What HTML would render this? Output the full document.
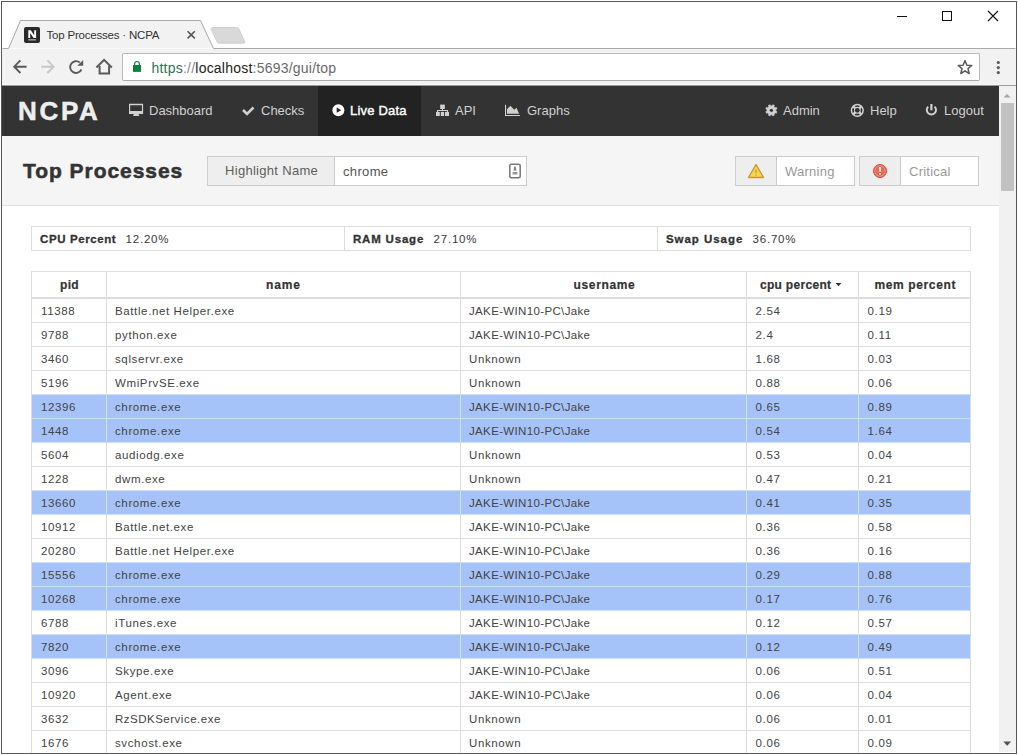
<!DOCTYPE html>
<html><head><meta charset="utf-8">
<style>
*{box-sizing:border-box;margin:0;padding:0}
html,body{width:1018px;height:755px;overflow:hidden;background:#fff;font-family:"Liberation Sans",sans-serif}
.abs{position:absolute}
#win{position:absolute;left:1px;top:1px;width:1016px;height:753px;border:1px solid #585858;background:transparent}
/* everything positioned in page coords relative to body, so use fixed containers */
.t{position:absolute;white-space:pre;line-height:1}
#tabtitle{left:46.5px;top:29.8px;font-size:11.5px;letter-spacing:-0.2px;color:#333}
#toolbar{left:2px;top:49px;width:1014px;height:36px;background:#f2f2f2}
#omni{left:122px;top:53px;width:858px;height:28px;background:#fff;border:1px solid #b9b9b9;border-bottom-color:#a9a9a9;border-radius:2px}
#nav{left:2px;top:86px;width:997px;height:50px;background:#333}
#live{left:318px;top:86px;width:103px;height:50px;background:#222}
.nt{color:#d0d0d0;font-size:13px;top:104px}
#hdr{left:2px;top:136px;width:997px;height:70px;background:#f5f5f5;border-bottom:1px solid #e0e0e0}
#sb{left:999px;top:86px;width:17px;height:666px;background:#f1f1f1}
#thumb{left:1001px;top:103px;width:13px;height:88px;background:#c1c1c1}

.grp{position:absolute;top:156px;height:30px;border:1px solid #ccc;background:#fff}
.addon{position:absolute;top:156px;height:30px;border:1px solid #ccc;background:#eee}
.ph{color:#999;font-size:13px;top:164.5px;letter-spacing:0.25px}
#sum{left:31px;top:226px;width:940px;height:25px;border:1px solid #ddd}
.sl{font-size:11.5px;font-weight:bold;color:#333;top:234px;-webkit-text-stroke:0.3px #333}
.sv{font-size:11.5px;color:#3a3a3a;top:234px}
#tbl{left:31px;top:271px;width:940px;height:500px;border:1px solid #ddd;border-bottom:none}
.vl{position:absolute;top:271px;width:1px;height:500px;background:#ddd}
.hl{position:absolute;left:32px;width:938px;height:23px;background:#a5c3f8}
.hb{position:absolute;left:32px;width:938px;height:1px;background:#ddd}
.th{font-size:12px;font-weight:bold;color:#333;top:279px;letter-spacing:0.3px;-webkit-text-stroke:0.2px #333}
.c{position:absolute;white-space:pre;font-size:11.5px;line-height:23px;color:#444;padding-top:1px}
.d{letter-spacing:0.7px}
.n{letter-spacing:0.62px}
.u{letter-spacing:0.35px}
</style></head>
<body>

<!-- tab strip -->
<svg class="abs" style="left:0;top:0" width="1018" height="90">
  <path d="M2.5 48.5 H8.5 L20.5 20.5 H200.5 L213.5 48.5 H1015.5" fill="#f2f2f2" stroke="#a9a9a9" stroke-width="1"/>
  <path d="M213 27.5 H236.8 Q238.2 27.5 238.8 28.8 L244.6 41.3 Q245.2 43.2 243.4 43.2 H219 Q217.8 43.2 217.2 42 L211.2 29.3 Q210.8 27.5 213 27.5Z" fill="#d9d9d9" stroke="#c6c6c6" stroke-width="0.8"/>
  <!-- favicon -->
  <rect x="24" y="27" width="16" height="16" rx="2" fill="#2a2a2a"/>
  <path d="M28.3 30.2h2.5l3.4 5.1v-5.1h1.9v7.9h-2.5l-3.4-5.1v5.1h-1.9z" fill="#fff"/>
  <rect x="28.3" y="39.3" width="7.8" height="1.1" fill="#c8c8c8"/>
  <!-- close x -->
  <path d="M187.6 31.2 L194.8 38.4 M194.8 31.2 L187.6 38.4" stroke="#555" stroke-width="1.6"/>
  <!-- window controls -->
  <rect x="897" y="16" width="10" height="1" fill="#111"/>
  <rect x="942.5" y="11.5" width="9" height="9" fill="none" stroke="#111" stroke-width="1"/>
  <path d="M988 11 L998 21 M998 11 L988 21" stroke="#111" stroke-width="1.1"/>
</svg>
<div id="tabtitle" class="t">Top Processes · NCPA</div>

<div id="toolbar" class="abs"></div>
<div class="abs" style="left:2px;top:84px;width:1014px;height:1px;background:#f7f7f7"></div>
<div class="abs" style="left:2px;top:85px;width:1014px;height:1px;background:#9a9a9a"></div>
<div id="omni" class="abs"></div>
<svg class="abs" style="left:0;top:0" width="1018" height="90">
  <path d="M26.6 66.7 H14.2 M20.4 60.4 L14.2 66.7 L20.4 73" fill="none" stroke="#5a5a5a" stroke-width="1.9"/>
  <path d="M41.2 66.7 H53.6 M47.4 60.4 L53.6 66.7 L47.4 73" fill="none" stroke="#c8c8c8" stroke-width="1.9"/>
  <path d="M79.8 62.5 A5.9 5.9 0 1 0 81.4 69.5" fill="none" stroke="#5a5a5a" stroke-width="1.9"/>
  <path d="M77.3 65.7 L83.2 59.9 V65.8 Z" fill="#5a5a5a"/>
  <path d="M96.4 67.5 L104.1 59.8 L111.8 67.5" fill="none" stroke="#5a5a5a" stroke-width="2"/>
  <path d="M99.6 66 V73.6 H109.1 V66" fill="none" stroke="#5a5a5a" stroke-width="2"/>
  <rect x="133" y="65" width="8" height="6.9" fill="#0b8043"/>
  <path d="M134.6 65.2 V63.9 A2.4 2.4 0 0 1 139.4 63.9 V65.2" fill="none" stroke="#0b8043" stroke-width="1.2"/>
  <path d="M965 60.5 L966.9 65.2 L971.8 65.5 L968 68.6 L969.2 73.5 L965 70.8 L960.8 73.5 L962 68.6 L958.2 65.5 L963.1 65.2 Z" fill="none" stroke="#5a5a5a" stroke-width="1.5" stroke-linejoin="round"/>
  <circle cx="998.3" cy="62.5" r="1.6" fill="#5a5a5a"/>
  <circle cx="998.3" cy="67.6" r="1.6" fill="#5a5a5a"/>
  <circle cx="998.3" cy="72.6" r="1.6" fill="#5a5a5a"/>
</svg>
<div class="t" style="left:151.5px;top:61px;font-size:14px;letter-spacing:0.22px;color:#6a6a6a"><span style="color:#2f7650">https</span><span style="color:#888">://</span><span style="color:#222">localhost</span>:5693/gui/top</div>

<!-- navbar -->
<div id="nav" class="abs"></div>
<div id="live" class="abs"></div>
<div class="t" style="left:18px;top:98px;font-size:26px;font-weight:bold;color:#eee;letter-spacing:2.7px;-webkit-text-stroke:0.5px #eee">NCPA</div>
<div class="t nt" style="left:149px">Dashboard</div>
<div class="t nt" style="left:261px">Checks</div>
<div class="t nt" style="left:350px;color:#fff;letter-spacing:0.2px;-webkit-text-stroke:0.4px #fff">Live Data</div>
<div class="t nt" style="left:455px">API</div>
<div class="t nt" style="left:527px">Graphs</div>
<div class="t nt" style="left:783px">Admin</div>
<div class="t nt" style="left:870px">Help</div>
<div class="t nt" style="left:944px">Logout</div>


<svg class="abs" style="left:0;top:0" width="1018" height="140">
 <g fill="#d0d0d0">
  <path fill-rule="evenodd" d="M129 103.8 H143.1 V113.9 H129 Z M130.2 105.2 V110.9 H141.9 V105.2 Z"/>
  <path d="M133.7 113.9 H138.7 V115 H139.2 V116 H133.2 V115 H133.7 Z"/>
 </g>
 <path d="M243 110 L247 114 L253.5 107.5" fill="none" stroke="#d0d0d0" stroke-width="2.6"/>
 <circle cx="338.35" cy="110.2" r="6" fill="#fff"/>
 <path d="M336.7 107.6 L341.2 110.2 L336.7 112.8Z" fill="#222"/>
 <g fill="#d0d0d0">
  <rect x="440.2" y="104.6" width="4.6" height="4.4"/>
  <rect x="442" y="108.5" width="1" height="2.5"/>
  <rect x="437" y="110" width="11" height="1"/>
  <rect x="437" y="110" width="1" height="2"/>
  <rect x="447" y="110" width="1" height="2"/>
  <rect x="436" y="111.9" width="3.8" height="4.1"/>
  <rect x="440.8" y="111.9" width="3.3" height="4.1"/>
  <rect x="445" y="111.9" width="4" height="4.1"/>
 </g>
 <g fill="#d0d0d0">
  <path d="M505 104.8 H506.1 V115 H520 V116 H505 Z"/>
  <path d="M507 113.8 V109.2 L510.3 105.8 L514.3 109.8 L516.5 107.8 L519 113.5 V113.8 Z"/>
 </g>
 <path fill="#d0d0d0" stroke="#d0d0d0" stroke-width="0.5" stroke-linejoin="round" d="M775.84 111.00 L777.04 111.65 L776.35 113.33 L775.04 112.95 L774.05 113.94 L774.43 115.25 L772.75 115.94 L772.10 114.74 L770.70 114.74 L770.05 115.94 L768.37 115.25 L768.75 113.94 L767.76 112.95 L766.45 113.33 L765.76 111.65 L766.96 111.00 L766.96 109.60 L765.76 108.95 L766.45 107.27 L767.76 107.65 L768.75 106.66 L768.37 105.35 L770.05 104.66 L770.70 105.86 L772.10 105.86 L772.75 104.66 L774.43 105.35 L774.05 106.66 L775.04 107.65 L776.35 107.27 L777.04 108.95 L775.84 109.60Z"/>
 <circle cx="771.4" cy="110.3" r="1.6" fill="#333"/>
 <circle cx="857.3" cy="110.3" r="6.6" fill="#d0d0d0"/>
 <circle cx="857.3" cy="110.3" r="4.3" fill="none" stroke="#333" stroke-width="1.7"/>
 <g transform="rotate(45 857.3 110.3)" fill="#d0d0d0"><rect x="856.0999999999999" y="104.3" width="2.4" height="12"/><rect x="851.3" y="109.1" width="12" height="2.4"/></g>
 <circle cx="857.3" cy="110.3" r="2.4" fill="#333"/>
 <path d="M928.2 106.6 A4.6 4.6 0 1 0 934.6 106.6" fill="none" stroke="#d0d0d0" stroke-width="2"/>
 <rect x="930.3" y="104" width="2.2" height="6.3" fill="#d0d0d0"/>
</svg>

<!-- page header -->
<div id="hdr" class="abs"></div>
<div class="t" style="left:23px;top:160px;font-size:21px;font-weight:bold;color:#333;letter-spacing:0.95px;-webkit-text-stroke:0.55px #333">Top Processes</div>


<!-- highlight group -->
<div class="addon" style="left:207px;width:128px"></div>
<div class="grp" style="left:334px;width:193px"></div>
<div class="t" style="left:225px;top:164px;font-size:13px;color:#5e5e5e;letter-spacing:0.3px">Highlight Name</div>
<div class="t" style="left:343px;top:164.5px;font-size:13px;color:#555;letter-spacing:0.35px">chrome</div>
<svg class="abs" style="left:508px;top:163px" width="14" height="16">
 <rect x="1.8" y="1.2" width="10.4" height="13.6" rx="1.5" fill="none" stroke="#777" stroke-width="1.5"/>
 <path d="M6.3 3.6 H7.7 L8.6 7.6 H5.4 Z" fill="#888"/>
 <rect x="4.5" y="9" width="5" height="2.5" fill="#999"/>
</svg>
<!-- warning / critical -->
<div class="addon" style="left:735px;width:42px"></div>
<div class="grp" style="left:776px;width:79px"></div>
<div class="addon" style="left:859px;width:42px"></div>
<div class="grp" style="left:900px;width:79px"></div>
<div class="t ph" style="left:785px">Warning</div>
<div class="t ph" style="left:909px">Critical</div>
<svg class="abs" style="left:746px;top:162px" width="20" height="18">
 <path d="M10 2.5 L17.5 15.5 H2.5 Z" fill="#f5d454" stroke="#cf9532" stroke-width="1.4" stroke-linejoin="round"/>
 <path d="M10 7.5 V11" stroke="#c9a02a" stroke-width="1.4"/>
 <rect x="9.3" y="12.2" width="1.4" height="1.4" fill="#c9a02a"/>
</svg>
<svg class="abs" style="left:872px;top:163px" width="16" height="16">
 <circle cx="8" cy="8" r="6.5" fill="#e96a55" stroke="#c9503e" stroke-width="1"/><circle cx="8" cy="8" r="5.2" fill="none" stroke="#f29a88" stroke-width="0.8"/>
 <path d="M8 4 V8.8" stroke="#fff" stroke-width="1.6"/>
 <rect x="7.2" y="10" width="1.6" height="1.6" fill="#fff"/>
</svg>

<!-- summary -->
<div id="sum" class="abs"></div>
<div class="abs" style="left:344px;top:226px;width:1px;height:25px;background:#ddd"></div>
<div class="abs" style="left:657px;top:226px;width:1px;height:25px;background:#ddd"></div>
<div class="t sl" style="left:40px;letter-spacing:0.6px">CPU Percent</div>
<div class="t sv" style="left:125.5px;letter-spacing:0.8px">12.20%</div>
<div class="t sl" style="left:353px;letter-spacing:0.8px">RAM Usage</div>
<div class="t sv" style="left:433.5px;letter-spacing:0.8px">27.10%</div>
<div class="t sl" style="left:666px;letter-spacing:0.95px">Swap Usage</div>
<div class="t sv" style="left:752.5px;letter-spacing:0.8px">36.70%</div>

<!-- table -->
<div id="tbl" class="abs"></div>
<div class="abs" style="left:32px;top:297px;width:938px;height:2px;background:#ddd"></div>
<div class="t th" style="left:60px">pid</div>
<div class="t th" style="left:266px;letter-spacing:0.9px">name</div>
<div class="t th" style="left:573.5px;letter-spacing:0.65px">username</div>
<div class="t th" style="left:760px">cpu percent</div>
<svg class="abs" style="left:835px;top:282px" width="8" height="6"><path d="M0.5 1 H6.5 L3.5 4.2Z" fill="#333"/></svg>
<div class="t th" style="left:874.5px;letter-spacing:0.62px">mem percent</div>
<div class="hb" style="top:322px"></div>
<div class="c d" style="top:299px;left:41px;letter-spacing:0.6px">11388</div><div class="c n" style="top:299px;left:115px">Battle.net Helper.exe</div><div class="c u" style="top:299px;left:469px">JAKE-WIN10-PC\Jake</div><div class="c d" style="top:299px;left:755.5px">2.54</div><div class="c d" style="top:299px;left:867.5px">0.19</div>
<div class="hb" style="top:346px"></div>
<div class="c d" style="top:323px;left:41px;letter-spacing:0.6px">9788</div><div class="c n" style="top:323px;left:115px">python.exe</div><div class="c u" style="top:323px;left:469px">JAKE-WIN10-PC\Jake</div><div class="c d" style="top:323px;left:755.5px">2.4</div><div class="c d" style="top:323px;left:867.5px">0.11</div>
<div class="hb" style="top:370px"></div>
<div class="c d" style="top:347px;left:41px;letter-spacing:0.6px">3460</div><div class="c n" style="top:347px;left:115px">sqlservr.exe</div><div class="c n" style="top:347px;left:469px">Unknown</div><div class="c d" style="top:347px;left:755.5px">1.68</div><div class="c d" style="top:347px;left:867.5px">0.03</div>
<div class="hb" style="top:394px;background:#cfddf6"></div>
<div class="c d" style="top:371px;left:41px;letter-spacing:0.6px">5196</div><div class="c n" style="top:371px;left:115px">WmiPrvSE.exe</div><div class="c n" style="top:371px;left:469px">Unknown</div><div class="c d" style="top:371px;left:755.5px">0.88</div><div class="c d" style="top:371px;left:867.5px">0.06</div>
<div class="hl" style="top:395px"></div>
<div class="hb" style="top:418px;background:#cfddf6"></div>
<div class="c d" style="top:395px;left:41px;letter-spacing:0.6px">12396</div><div class="c n" style="top:395px;left:115px">chrome.exe</div><div class="c u" style="top:395px;left:469px">JAKE-WIN10-PC\Jake</div><div class="c d" style="top:395px;left:755.5px">0.65</div><div class="c d" style="top:395px;left:867.5px">0.89</div>
<div class="hl" style="top:419px"></div>
<div class="hb" style="top:442px;background:#cfddf6"></div>
<div class="c d" style="top:419px;left:41px;letter-spacing:0.6px">1448</div><div class="c n" style="top:419px;left:115px">chrome.exe</div><div class="c u" style="top:419px;left:469px">JAKE-WIN10-PC\Jake</div><div class="c d" style="top:419px;left:755.5px">0.54</div><div class="c d" style="top:419px;left:867.5px">1.64</div>
<div class="hb" style="top:466px"></div>
<div class="c d" style="top:443px;left:41px;letter-spacing:0.6px">5604</div><div class="c n" style="top:443px;left:115px">audiodg.exe</div><div class="c n" style="top:443px;left:469px">Unknown</div><div class="c d" style="top:443px;left:755.5px">0.53</div><div class="c d" style="top:443px;left:867.5px">0.04</div>
<div class="hb" style="top:490px;background:#cfddf6"></div>
<div class="c d" style="top:467px;left:41px;letter-spacing:0.6px">1228</div><div class="c n" style="top:467px;left:115px">dwm.exe</div><div class="c n" style="top:467px;left:469px">Unknown</div><div class="c d" style="top:467px;left:755.5px">0.47</div><div class="c d" style="top:467px;left:867.5px">0.21</div>
<div class="hl" style="top:491px"></div>
<div class="hb" style="top:514px;background:#cfddf6"></div>
<div class="c d" style="top:491px;left:41px;letter-spacing:0.6px">13660</div><div class="c n" style="top:491px;left:115px">chrome.exe</div><div class="c u" style="top:491px;left:469px">JAKE-WIN10-PC\Jake</div><div class="c d" style="top:491px;left:755.5px">0.41</div><div class="c d" style="top:491px;left:867.5px">0.35</div>
<div class="hb" style="top:538px"></div>
<div class="c d" style="top:515px;left:41px;letter-spacing:0.6px">10912</div><div class="c n" style="top:515px;left:115px">Battle.net.exe</div><div class="c u" style="top:515px;left:469px">JAKE-WIN10-PC\Jake</div><div class="c d" style="top:515px;left:755.5px">0.36</div><div class="c d" style="top:515px;left:867.5px">0.58</div>
<div class="hb" style="top:562px;background:#cfddf6"></div>
<div class="c d" style="top:539px;left:41px;letter-spacing:0.6px">20280</div><div class="c n" style="top:539px;left:115px">Battle.net Helper.exe</div><div class="c u" style="top:539px;left:469px">JAKE-WIN10-PC\Jake</div><div class="c d" style="top:539px;left:755.5px">0.36</div><div class="c d" style="top:539px;left:867.5px">0.16</div>
<div class="hl" style="top:563px"></div>
<div class="hb" style="top:586px;background:#cfddf6"></div>
<div class="c d" style="top:563px;left:41px;letter-spacing:0.6px">15556</div><div class="c n" style="top:563px;left:115px">chrome.exe</div><div class="c u" style="top:563px;left:469px">JAKE-WIN10-PC\Jake</div><div class="c d" style="top:563px;left:755.5px">0.29</div><div class="c d" style="top:563px;left:867.5px">0.88</div>
<div class="hl" style="top:587px"></div>
<div class="hb" style="top:610px;background:#cfddf6"></div>
<div class="c d" style="top:587px;left:41px;letter-spacing:0.6px">10268</div><div class="c n" style="top:587px;left:115px">chrome.exe</div><div class="c u" style="top:587px;left:469px">JAKE-WIN10-PC\Jake</div><div class="c d" style="top:587px;left:755.5px">0.17</div><div class="c d" style="top:587px;left:867.5px">0.76</div>
<div class="hb" style="top:634px;background:#cfddf6"></div>
<div class="c d" style="top:611px;left:41px;letter-spacing:0.6px">6788</div><div class="c n" style="top:611px;left:115px">iTunes.exe</div><div class="c u" style="top:611px;left:469px">JAKE-WIN10-PC\Jake</div><div class="c d" style="top:611px;left:755.5px">0.12</div><div class="c d" style="top:611px;left:867.5px">0.57</div>
<div class="hl" style="top:635px"></div>
<div class="hb" style="top:658px;background:#cfddf6"></div>
<div class="c d" style="top:635px;left:41px;letter-spacing:0.6px">7820</div><div class="c n" style="top:635px;left:115px">chrome.exe</div><div class="c u" style="top:635px;left:469px">JAKE-WIN10-PC\Jake</div><div class="c d" style="top:635px;left:755.5px">0.12</div><div class="c d" style="top:635px;left:867.5px">0.49</div>
<div class="hb" style="top:682px"></div>
<div class="c d" style="top:659px;left:41px;letter-spacing:0.6px">3096</div><div class="c n" style="top:659px;left:115px">Skype.exe</div><div class="c u" style="top:659px;left:469px">JAKE-WIN10-PC\Jake</div><div class="c d" style="top:659px;left:755.5px">0.06</div><div class="c d" style="top:659px;left:867.5px">0.51</div>
<div class="hb" style="top:706px"></div>
<div class="c d" style="top:683px;left:41px;letter-spacing:0.6px">10920</div><div class="c n" style="top:683px;left:115px">Agent.exe</div><div class="c u" style="top:683px;left:469px">JAKE-WIN10-PC\Jake</div><div class="c d" style="top:683px;left:755.5px">0.06</div><div class="c d" style="top:683px;left:867.5px">0.04</div>
<div class="hb" style="top:730px"></div>
<div class="c d" style="top:707px;left:41px;letter-spacing:0.6px">3632</div><div class="c n" style="top:707px;left:115px;letter-spacing:0.5px">RzSDKService.exe</div><div class="c n" style="top:707px;left:469px">Unknown</div><div class="c d" style="top:707px;left:755.5px">0.06</div><div class="c d" style="top:707px;left:867.5px">0.01</div>
<div class="hb" style="top:754px"></div>
<div class="c d" style="top:731px;left:41px;letter-spacing:0.6px">1676</div><div class="c n" style="top:731px;left:115px">svchost.exe</div><div class="c n" style="top:731px;left:469px">Unknown</div><div class="c d" style="top:731px;left:755.5px">0.06</div><div class="c d" style="top:731px;left:867.5px">0.09</div>
<div class="vl" style="left:106px"></div>
<div class="vl" style="left:460px"></div>
<div class="vl" style="left:746px"></div>
<div class="vl" style="left:858px"></div>
<div class="abs" style="left:106px;top:395px;width:1px;height:23px;background:#d3dff7"></div>
<div class="abs" style="left:460px;top:395px;width:1px;height:23px;background:#d3dff7"></div>
<div class="abs" style="left:746px;top:395px;width:1px;height:23px;background:#d3dff7"></div>
<div class="abs" style="left:858px;top:395px;width:1px;height:23px;background:#d3dff7"></div>
<div class="abs" style="left:106px;top:419px;width:1px;height:23px;background:#d3dff7"></div>
<div class="abs" style="left:460px;top:419px;width:1px;height:23px;background:#d3dff7"></div>
<div class="abs" style="left:746px;top:419px;width:1px;height:23px;background:#d3dff7"></div>
<div class="abs" style="left:858px;top:419px;width:1px;height:23px;background:#d3dff7"></div>
<div class="abs" style="left:106px;top:491px;width:1px;height:23px;background:#d3dff7"></div>
<div class="abs" style="left:460px;top:491px;width:1px;height:23px;background:#d3dff7"></div>
<div class="abs" style="left:746px;top:491px;width:1px;height:23px;background:#d3dff7"></div>
<div class="abs" style="left:858px;top:491px;width:1px;height:23px;background:#d3dff7"></div>
<div class="abs" style="left:106px;top:563px;width:1px;height:23px;background:#d3dff7"></div>
<div class="abs" style="left:460px;top:563px;width:1px;height:23px;background:#d3dff7"></div>
<div class="abs" style="left:746px;top:563px;width:1px;height:23px;background:#d3dff7"></div>
<div class="abs" style="left:858px;top:563px;width:1px;height:23px;background:#d3dff7"></div>
<div class="abs" style="left:106px;top:587px;width:1px;height:23px;background:#d3dff7"></div>
<div class="abs" style="left:460px;top:587px;width:1px;height:23px;background:#d3dff7"></div>
<div class="abs" style="left:746px;top:587px;width:1px;height:23px;background:#d3dff7"></div>
<div class="abs" style="left:858px;top:587px;width:1px;height:23px;background:#d3dff7"></div>
<div class="abs" style="left:106px;top:635px;width:1px;height:23px;background:#d3dff7"></div>
<div class="abs" style="left:460px;top:635px;width:1px;height:23px;background:#d3dff7"></div>
<div class="abs" style="left:746px;top:635px;width:1px;height:23px;background:#d3dff7"></div>
<div class="abs" style="left:858px;top:635px;width:1px;height:23px;background:#d3dff7"></div>


<!-- scrollbar -->
<div id="sb" class="abs"></div>
<div id="thumb" class="abs"></div>
<svg class="abs" style="left:999px;top:86px" width="17" height="666">
 <path d="M4.5 11.5 H11.5 L8 8 Z" fill="#a3a3a3"/>
 <path d="M4.3 655.6 H12.1 L8.2 659.8 Z" fill="#505050"/>
</svg>
<div class="abs" style="left:0;top:754px;width:1018px;height:1px;background:#fff"></div>
<div id="win"></div>

</body></html>
